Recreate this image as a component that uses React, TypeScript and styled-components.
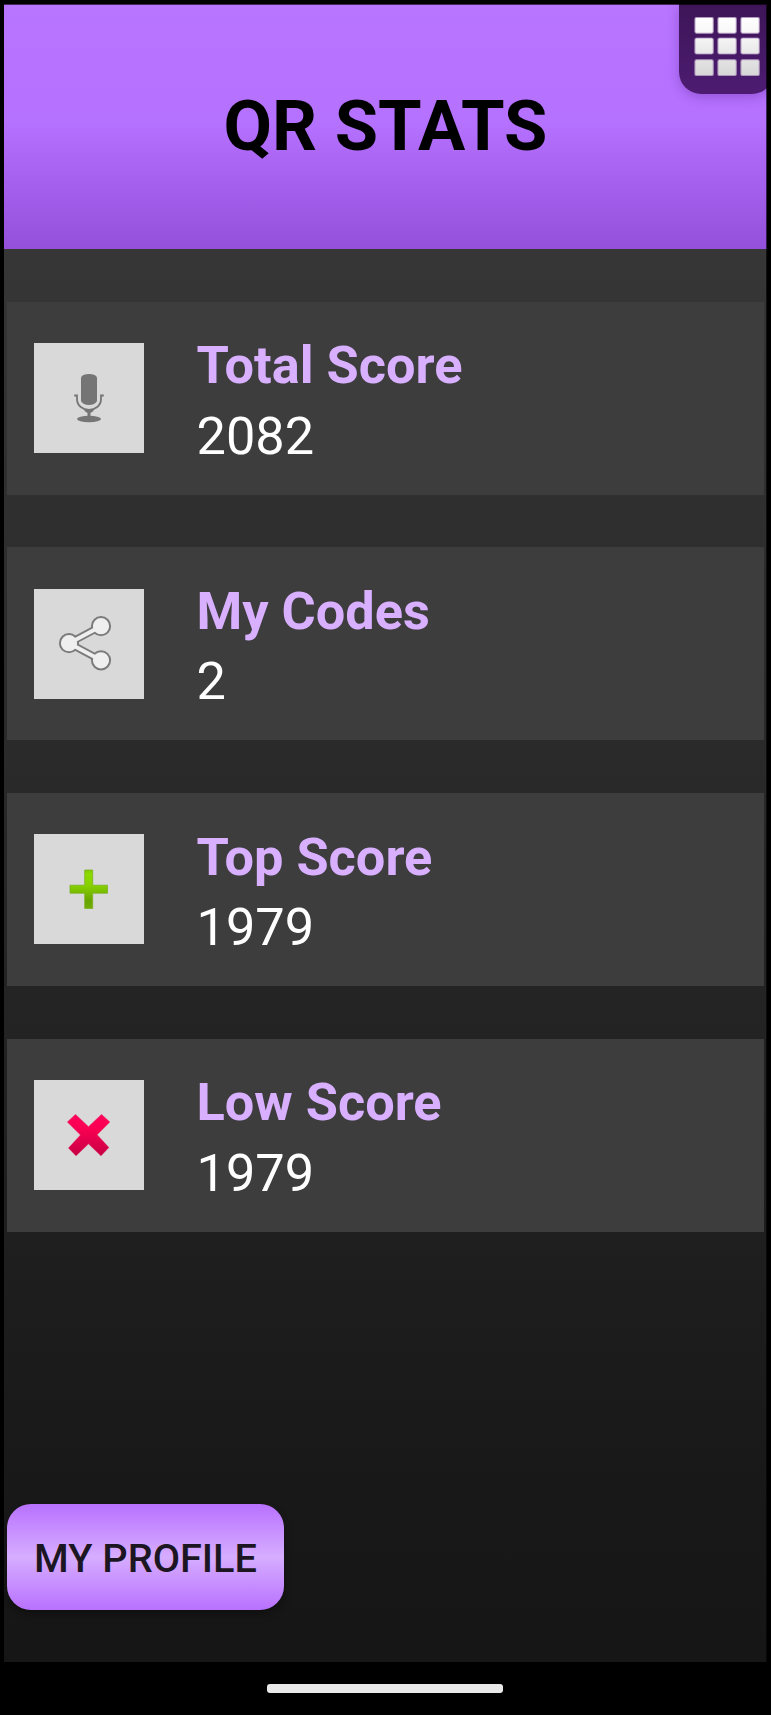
import React from "react";
import styled, { createGlobalStyle } from "styled-components";

const GlobalStyle = createGlobalStyle`
  * { box-sizing: border-box; }
  body { margin: 0; background: #000; font-family: Roboto, "Liberation Sans", sans-serif; }
`;

const Device = styled.div`
  width: 771px;
  height: 1715px;
  padding: 4px 4px 0;
  display: flex;
  flex-direction: column;
  background: #000;
  overflow: hidden;
`;

const Screen = styled.main`
  position: relative;
  height: 1658px;
  display: flex;
  flex-direction: column;
  overflow: hidden;
  background: linear-gradient(#3a3a3a 0%, #363636 15%, #2f2f2f 31%, #2a2a2a 45%, #242424 59%, #1e1e1e 76%, #181818 90%, #161616 100%);

  &::after {
    content: "";
    position: absolute;
    inset: 0;
    box-shadow: inset -1px 1px rgba(0, 0, 0, 0.65);
    pointer-events: none;
  }
`;

const Header = styled.header`
  height: 245px;
  flex: none;
  display: flex;
  justify-content: center;
  background: linear-gradient(#b875ff 0%, #b571ff 48%, #9450da 100%);
`;

const Title = styled.h1`
  margin: 0;
  padding-top: 81px;
  font-size: 70.4px;
  line-height: 82px;
  font-weight: 700;
  color: #000;
  white-space: nowrap;
`;

const MenuTab = styled.button`
  position: absolute;
  top: 0;
  right: -7px;
  width: 95px;
  height: 90px;
  padding: 13px 14px 18px 15px;
  border: 0;
  border-radius: 0 0 22px 22px;
  background: linear-gradient(#3d1557, #4d1c72);
  box-shadow: 0 3px 12px rgba(70, 20, 120, 0.3);
  svg { display: block; }
`;

const StatList = styled.section`
  display: flex;
  flex-direction: column;
  gap: 52.67px;
  padding: 52.6px 3px 0;
`;

const StatCard = styled.article`
  height: 193px;
  display: flex;
  align-items: flex-start;
  gap: 52.5px;
  padding: 28.4px 27px 0;
  background: #3d3d3d;
`;

const IconTile = styled.div`
  width: 110px;
  height: 110px;
  margin-top: 13px;
  flex: none;
  background: #d9d9d9;
  svg { display: block; }
`;

const StatText = styled.div`
  display: flex;
  flex-direction: column;
  padding-top: 0.3px;
  font-size: 52.3px;
  line-height: 70.3px;
  white-space: nowrap;
`;

const Label = styled.span`
  font-weight: 700;
  color: #d8b0ff;
`;

const Value = styled.span`
  color: #fff;
`;

const ProfileButton = styled.button`
  width: 277px;
  height: 106px;
  margin: auto 0 52px 3px;
  padding: 4px 0 0;
  border: 0;
  border-radius: 24px;
  font: 500 39.7px/46px Roboto, sans-serif;
  color: #1c1522;
  white-space: nowrap;
  background: linear-gradient(#b871ff, #d6adff 50%, #b871ff);
  box-shadow: 0 5px 9px rgba(0, 0, 0, 0.3);
`;

const NavBar = styled.footer`
  height: 53px;
  padding: 22px 1px 0 0;
  display: flex;
  justify-content: center;
`;

const HomeHandle = styled.div`
  width: 236px;
  height: 9px;
  border-radius: 3px;
  background: #e9e9e9;
`;

const GridIcon = () => (
  <svg width="66" height="59" viewBox="0 0 66 59">
    <defs>
      <linearGradient id="cells" x1="0" y1="0" x2="0" y2="59" gradientUnits="userSpaceOnUse">
        <stop offset="0" stopColor="#fff" />
        <stop offset="0.3" stopColor="#f7f7f7" />
        <stop offset="1" stopColor="#d6d6d6" />
      </linearGradient>
    </defs>
    {[0.3, 21, 42.7].map((y) =>
      [0.9, 23.9, 46.9].map((x) => (
        <rect key={`${x}-${y}`} x={x} y={y} width="18.4" height="16" rx="1.8" fill="url(#cells)" stroke="#a98fb9" strokeOpacity="0.8" strokeWidth="1.2" />
      ))
    )}
  </svg>
);

const MicIcon = () => (
  <svg width="110" height="110" viewBox="0 0 110 110" fill="#757575">
    <path d="M47 34.5Q48 31 55 31Q62 31 63 34.5V58Q61 62 55 62Q49 62 47 58Z" />
    <path d="M40.2 52.5H43V56C43 63 49 66.8 55 66.8S67 63 67 56V52.5H69.8" fill="none" stroke="#757575" strokeWidth="1.8" />
    <path d="M50.5 66.5H59.5V68L56.5 70V73.5H53.5V70L50.5 68Z" />
    <ellipse cx="55" cy="76" rx="12" ry="3.2" />
  </svg>
);

const ShareIcon = () => (
  <svg width="110" height="110" viewBox="0 0 110 110">
    <path d="M67 37.2L35 54.2L67 71.3" fill="none" stroke="#7b7b7b" strokeWidth="7.6" />
    <g fill="#efefef" stroke="#7b7b7b" strokeWidth="2">
      <circle cx="67" cy="37.2" r="9.1" />
      <circle cx="35" cy="54.2" r="9.1" />
      <circle cx="67" cy="71.3" r="9.1" />
    </g>
    <path d="M67 37.2L35 54.2L67 71.3" fill="none" stroke="#efefef" strokeWidth="3.8" />
  </svg>
);

const PlusIcon = () => (
  <svg width="110" height="110" viewBox="0 0 110 110">
    <defs>
      <linearGradient id="green" x1="0" y1="0" x2="0" y2="1">
        <stop offset="0" stopColor="#7fc900" />
        <stop offset="0.1" stopColor="#8ddb00" />
        <stop offset="0.4" stopColor="#87d100" />
        <stop offset="0.8" stopColor="#68a400" />
        <stop offset="1" stopColor="#70ad05" />
      </linearGradient>
    </defs>
    <path d="M50.7 36H58.7V51.2H73.5V59.2H58.7V74.5H50.7V59.2H36V51.2H50.7Z" fill="url(#green)" stroke="#76ae18" strokeWidth="0.7" strokeLinejoin="round" />
  </svg>
);

const CrossIcon = () => (
  <svg width="110" height="110" viewBox="0 0 110 110">
    <defs>
      <linearGradient id="red" x1="0" y1="0" x2="0" y2="1">
        <stop offset="0" stopColor="#ff0059" />
        <stop offset="0.35" stopColor="#f90053" />
        <stop offset="1" stopColor="#c60043" />
      </linearGradient>
    </defs>
    <path d="M41.5 34.3L54.5 46.5L67.5 34.3L76 42L63.3 54.7L75 67.5L67 76L54.5 64L42 76L34.3 68L46.3 55L33.2 42Z" fill="url(#red)" stroke="#e0648b" strokeOpacity="0.5" strokeWidth="0.8" strokeLinejoin="round" />
  </svg>
);

const stats = [
  { label: "Total Score", value: "2082", Icon: MicIcon },
  { label: "My Codes", value: "2", Icon: ShareIcon },
  { label: "Top Score", value: "1979", Icon: PlusIcon },
  { label: "Low Score", value: "1979", Icon: CrossIcon },
];

export default function App() {
  return (
    <>
      <GlobalStyle />
      <Device>
        <Screen>
          <Header>
            <Title>QR STATS</Title>
          </Header>
          <MenuTab aria-label="Menu">
            <GridIcon />
          </MenuTab>
          <StatList>
            {stats.map(({ label, value, Icon }) => (
              <StatCard key={label}>
                <IconTile>
                  <Icon />
                </IconTile>
                <StatText>
                  <Label>{label}</Label>
                  <Value>{value}</Value>
                </StatText>
              </StatCard>
            ))}
          </StatList>
          <ProfileButton>MY PROFILE</ProfileButton>
        </Screen>
        <NavBar>
          <HomeHandle />
        </NavBar>
      </Device>
    </>
  );
}
